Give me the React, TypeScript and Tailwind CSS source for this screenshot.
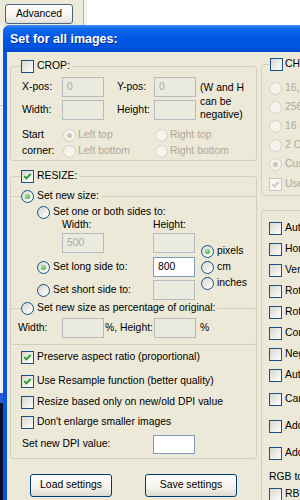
import React from "react";

type CB = { checked?: boolean; disabled?: boolean };

function Check({ checked = false, disabled = false }: CB) {
  return (
    <span
      className={`inline-flex h-[13px] w-[13px] shrink-0 items-center justify-center border ${
        disabled
          ? "border-[#cac8bb] bg-[#f7f6f0]"
          : "border-[#1c5180] bg-[linear-gradient(135deg,#d6d6d0,#ffffff)]"
      }`}
    >
      {checked && (
        <svg width="11" height="11" viewBox="0 0 11 11">
          <path
            d="M2.3 5.2 L4.4 7.4 L8.7 2.9"
            fill="none"
            stroke={disabled ? "#cac8bb" : "#21a121"}
            strokeWidth="1.9"
          />
        </svg>
      )}
    </span>
  );
}

function Radio({ checked = false, disabled = false }: CB) {
  return (
    <span
      className={`inline-flex h-[13px] w-[13px] shrink-0 items-center justify-center rounded-full border ${
        disabled
          ? "border-[#d2d0c4] bg-[#f4f3ec]"
          : "border-[#1c5180] bg-[linear-gradient(135deg,#d6d6d0,#ffffff)]"
      }`}
    >
      {checked && (
        <span
          className={`h-[5px] w-[5px] rounded-full ${
            disabled
              ? "bg-[#cac8bb]"
              : "bg-[radial-gradient(circle_at_40%_35%,#a6eca6,#21a121)]"
          }`}
        />
      )}
    </span>
  );
}

function Field({
  value = "",
  disabled = false,
  tall = true,
}: {
  value?: string;
  disabled?: boolean;
  tall?: boolean;
}) {
  return (
    <span
      className={`flex w-[42px] shrink-0 items-center border pl-[4px] ${tall ? "h-[20px]" : "h-[19px]"} ${
        disabled
          ? "border-[#b4bcc2] bg-[#ebeadf] text-[#aca899]"
          : "border-[#7f9db9] bg-white text-black"
      }`}
    >
      {value}
    </span>
  );
}

function Legend({ children, left = "left-[10px]" }: { children: React.ReactNode; left?: string }) {
  return (
    <div
      className={`absolute top-[-7px] ${left} flex h-[13px] items-center gap-[3px] bg-[#ece9d8] pr-[2px]`}
    >
      {children}
    </div>
  );
}

function XpButton({ label, w }: { label: string; w: string }) {
  return (
    <div
      className={`flex h-[23px] ${w} shrink-0 items-center justify-center rounded-[3px] border border-[#003c74] bg-[linear-gradient(to_bottom,#ffffff,#f3f2ec_60%,#dcdad0)]`}
    >
      {label}
    </div>
  );
}

function CheckRow({ label, checked = false, cls }: { label: string; checked?: boolean; cls: string }) {
  return (
    <div className={`flex h-[16px] items-center gap-[3px] pl-[10px] ${cls}`}>
      <Check checked={checked} />
      <span className="whitespace-nowrap">{label}</span>
    </div>
  );
}

const rightChecks1 = [
  "Auto rotate",
  "Horizontal flip",
  "Vertical flip",
  "Rotate left",
  "Rotate right",
  "Correct colors",
  "Negative",
  "Auto adjust",
];
const rightChecks2 = ["Canvas size", "Add text", "Add watermark"];

export default function App() {
  return (
    <div className="flex h-[500px] w-[300px] flex-col overflow-hidden bg-[#ece9d8] font-['Liberation_Sans',Arial,sans-serif] text-[10.4px] leading-none text-black">
      {/* window behind */}
      <div className="flex h-[25px] shrink-0">
        <div className="w-[83px] pl-[5px] pt-[4px]">
          <div className="flex h-[20px] w-[68px] items-center justify-center rounded-[3px] border border-[#4a6584] bg-[linear-gradient(to_bottom,#ffffff,#f4f3ee_60%,#e2e0d6)]">
            Advanced
          </div>
        </div>
        <div className="w-px bg-[#b8b5a6]" />
        <div className="w-[3px] bg-[#f2f1ea]" />
        <div className="flex-1 bg-white" />
      </div>

      <div className="flex min-h-0 flex-1">
        <div className="flex w-[3px] shrink-0 flex-col">
          <div className="h-[80px] bg-[#f3f2ec]" />
          <div className="h-px bg-[#c9c7ba]" />
          <div className="flex-1 bg-[#f3f2ec]" />
          <div className="h-[10px] bg-[#2a5bd0]" />
          <div className="h-[97px] bg-[#0a0f25]" />
        </div>

        {/* dialog */}
        <div className="flex min-w-0 flex-1 flex-col overflow-hidden rounded-tl-[7px] bg-[#0a55e0]">
          <div className="flex h-[27px] shrink-0 items-center bg-[linear-gradient(to_bottom,#3d8cf7_0%,#0f66ee_14%,#0058e6_50%,#0054df_85%,#0349c9_100%)] pl-[7px] pt-[2px] text-[12.5px] font-bold text-white [text-shadow:1px_1px_0_#0b2a8c]">
            Set for all images:
          </div>

          <div className="ml-[4px] flex min-h-0 flex-1 bg-[#ece9d8] pl-[3px]">
            {/* left column */}
            <div className="flex w-[247px] shrink-0 flex-col">
              {/* CROP */}
              <div className="relative mt-[14px] h-[95px] shrink-0 rounded-[3px] border border-[#d0d0bf] pl-[11px] pt-[10px]">
                <Legend>
                  <Check />
                  <span>CROP:</span>
                </Legend>
                <div className="flex">
                  <div className="flex flex-col gap-[3px]">
                    <div className="flex h-[20px] items-center">
                      <span className="w-[40px]">X-pos:</span>
                      <Field disabled value="0" />
                      <span className="ml-[13px] w-[37px]">Y-pos:</span>
                      <Field disabled value="0" />
                    </div>
                    <div className="flex h-[20px] items-center">
                      <span className="w-[40px]">Width:</span>
                      <Field disabled />
                      <span className="ml-[13px] w-[37px]">Height:</span>
                      <Field disabled />
                    </div>
                  </div>
                  <div className="ml-[4px] pt-[4px] leading-[13.5px]">
                    (W and H
                    <br />
                    can be
                    <br />
                    negative)
                  </div>
                </div>
                <div className="mt-[6px] flex">
                  <div className="flex w-[41px] flex-col">
                    <span className="flex h-[16px] items-center">Start</span>
                    <span className="flex h-[16px] items-center">corner:</span>
                  </div>
                  <div className="flex flex-col text-[#aca899]">
                    <div className="flex h-[16px] items-center">
                      <span className="flex w-[92px] items-center gap-[2px]">
                        <Radio disabled checked />
                        Left top
                      </span>
                      <span className="flex items-center gap-[2px]">
                        <Radio disabled />
                        Right top
                      </span>
                    </div>
                    <div className="flex h-[16px] items-center">
                      <span className="flex w-[92px] items-center gap-[2px]">
                        <Radio disabled />
                        Left bottom
                      </span>
                      <span className="flex items-center gap-[2px]">
                        <Radio disabled />
                        Right bottom
                      </span>
                    </div>
                  </div>
                </div>
              </div>

              {/* RESIZE */}
              <div className="relative mt-[15px] h-[283px] shrink-0 rounded-[3px] border border-[#d0d0bf]">
                <Legend>
                  <Check checked />
                  <span>RESIZE:</span>
                </Legend>

                <div className="relative mt-[19px] border-t border-[#d0d0bf]">
                  <Legend>
                    <Radio checked />
                    <span>Set new size:</span>
                  </Legend>
                  <div className="ml-[26px] mt-[8px] flex h-[14px] items-center gap-[3px]">
                    <Radio />
                    <span>Set one or both sides to:</span>
                  </div>
                  <div className="flex">
                    <div className="flex w-[185px] shrink-0 flex-col">
                      <div className="flex h-[12px] items-center">
                        <span className="ml-[51px] w-[91px]">Width:</span>
                        <span>Height:</span>
                      </div>
                      <div className="mt-[2px] flex h-[20px] items-center">
                        <span className="w-[51px]" />
                        <Field disabled value="500" />
                        <span className="w-[49px]" />
                        <Field disabled />
                      </div>
                      <div className="mt-[4px] flex h-[20px] items-center">
                        <span className="ml-[26px] flex w-[116px] items-center gap-[3px]">
                          <Radio checked />
                          Set long side to:
                        </span>
                        <Field value="800" />
                      </div>
                      <div className="mt-[3px] flex h-[20px] items-center">
                        <span className="ml-[26px] flex w-[116px] items-center gap-[3px]">
                          <Radio />
                          Set short side to:
                        </span>
                        <Field disabled />
                      </div>
                    </div>
                    <div className="ml-[5px] flex flex-col pt-[24px]">
                      <span className="flex h-[16px] items-center gap-[3px]">
                        <Radio checked />
                        pixels
                      </span>
                      <span className="flex h-[16px] items-center gap-[3px]">
                        <Radio />
                        cm
                      </span>
                      <span className="flex h-[16px] items-center gap-[3px]">
                        <Radio />
                        inches
                      </span>
                    </div>
                  </div>
                </div>

                <div className="relative -mx-[1px] mt-[8px] rounded-[3px] border border-[#d0d0bf] pb-[6px] pt-[9px]">
                  <Legend>
                    <Radio />
                    <span>Set new size as percentage of original:</span>
                  </Legend>
                  <div className="flex h-[20px] items-center">
                    <span className="ml-[7px] w-[44px]">Width:</span>
                    <Field disabled />
                    <span className="ml-[1px] w-[49px]">%, Height:</span>
                    <Field disabled />
                    <span className="ml-[4px]">%</span>
                  </div>
                </div>

                <CheckRow cls="mt-[4px]" checked label="Preserve aspect ratio (proportional)" />
                <CheckRow cls="mt-[8px]" checked label="Use Resample function (better quality)" />
                <CheckRow cls="mt-[5px]" label="Resize based only on new/old DPI value" />
                <CheckRow cls="mt-[4px]" label="Don't enlarge smaller images" />
                <div className="mt-[5px] flex h-[19px] items-center">
                  <span className="ml-[11px] w-[131px]">Set new DPI value:</span>
                  <Field tall={false} />
                </div>
              </div>

              <div className="mt-[15px] flex">
                <div className="ml-[20px]">
                  <XpButton label="Load settings" w="w-[82px]" />
                </div>
                <div className="ml-[33px]">
                  <XpButton label="Save settings" w="w-[92px]" />
                </div>
              </div>
            </div>

            {/* right column */}
            <div className="ml-[4px] flex min-w-0 flex-1 flex-col overflow-hidden">
              <div className="relative mt-[12px] h-[132px] w-[160px] shrink-0 rounded-[3px] border border-[#d0d0bf] pl-[7px] pt-[14px]">
                <Legend left="left-[8px]">
                  <Check />
                  <span className="-ml-[1px] whitespace-nowrap">CHANGE COLOR DEPTH:</span>
                </Legend>
                <div className="flex flex-col text-[#aca899]">
                  {["16,7 mil. colors", "256 colors", "16 colors", "2 Colors", "Custom"].map((t, i) => (
                    <span key={t} className="flex h-[19px] items-center gap-[3px] whitespace-nowrap">
                      <Radio disabled checked={i === 4} />
                      {t}
                    </span>
                  ))}
                  <span className="mt-[2px] flex h-[17px] items-center gap-[3px] whitespace-nowrap">
                    <Check disabled checked />
                    Use palette
                  </span>
                </div>
              </div>

              <div className="mt-[14px] h-[320px] w-[160px] shrink-0 rounded-[3px] border border-[#d0d0bf] pl-[7px] pt-[7px]">
                {rightChecks1.map((t) => (
                  <div key={t} className="flex h-[21px] items-center gap-[3px] whitespace-nowrap">
                    <Check />
                    {t}
                  </div>
                ))}
                {rightChecks2.map((t) => (
                  <div key={t} className="flex h-[27px] items-center gap-[3px] whitespace-nowrap">
                    <Check />
                    {t}
                  </div>
                ))}
                <div className="mt-[3px] flex h-[14px] items-center whitespace-nowrap">RGB to BGR:</div>
                <div className="mt-[2px] flex h-[16px] items-center gap-[3px] whitespace-nowrap">
                  <Check />
                  RBG
                </div>
              </div>
            </div>
          </div>
        </div>
      </div>
    </div>
  );
}
